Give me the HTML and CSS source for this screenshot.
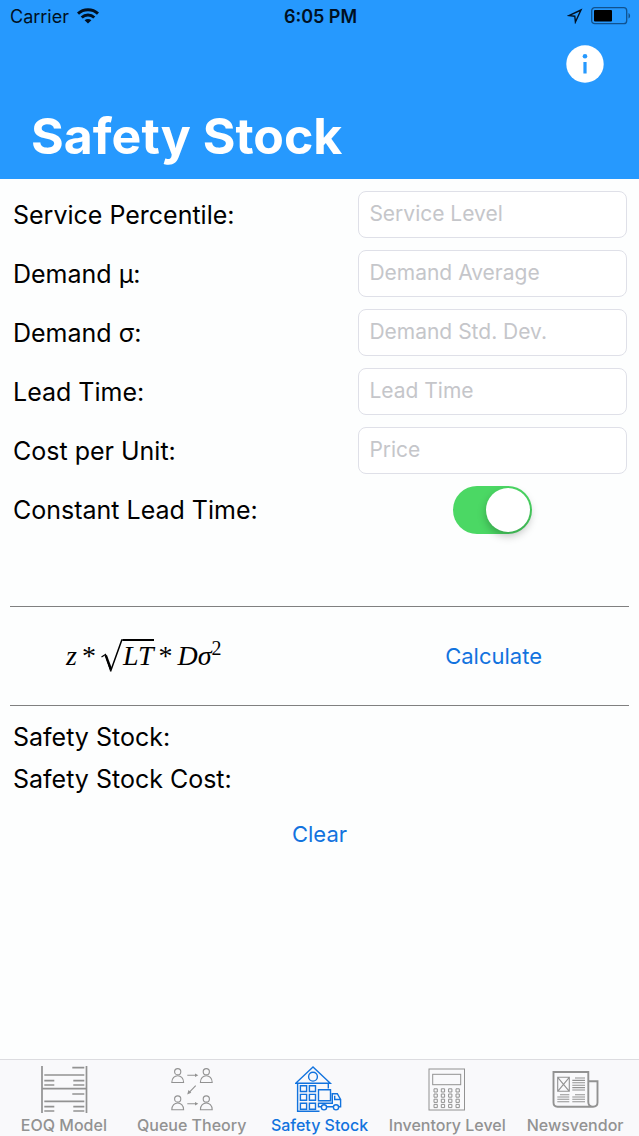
FILE: index.html
```html
<!DOCTYPE html>
<html lang="en">
<head>
    <meta charset="UTF-8">
    <meta name="viewport" content="width=device-width, initial-scale=1.0">
    <title>Safety Stock</title>
    <link rel="stylesheet" href="styles.css">
</head>
<body>
    <header class="header">
        <div class="status-bar">
            <div class="status-left">
                <span>Carrier</span>
                <svg width="22" height="16" viewBox="0 0 22 16" fill="none" stroke="#001022" stroke-width="3">
                    <path d="M1 5.6C6.5 0.4 15.5 0.4 21 5.6"/>
                    <path d="M4.7 9.5C8.3 6.2 13.7 6.2 17.3 9.5"/>
                    <path d="M11 15.6L7.6 12.2C9.4 10.6 12.6 10.6 14.4 12.2Z" fill="#001022" stroke="none"/>
                </svg>
            </div>
            <span class="status-time">6:05 PM</span>
            <div class="status-right">
                <svg width="16" height="16" viewBox="0 0 16 16" fill="none" stroke="#001022" stroke-width="1.4">
                    <path d="M14 2L1.8 7.6L7.8 8.2L8.4 14Z"/>
                </svg>
                <svg width="40" height="18" viewBox="0 0 40 18">
                    <rect x="0.7" y="0.7" width="35" height="16" rx="3" fill="none" stroke="#10528f" stroke-width="1.3"/>
                    <rect x="3" y="3" width="18" height="11.5" rx="1" fill="#000"/>
                    <path d="M37.5 6V11.5C39.6 10.6 39.6 7 37.5 6Z" fill="#10528f"/>
                </svg>
            </div>
        </div>
        <button type="button" class="info-button" aria-label="Info">
            <svg width="38" height="38" viewBox="0 0 38 38">
                <circle cx="19" cy="19" r="18.7" fill="#fff"/>
                <circle cx="19" cy="11.3" r="2.3" fill="#2699fe"/>
                <rect x="17.4" y="17" width="3.2" height="11.5" fill="#2699fe"/>
            </svg>
        </button>
        <h1>Safety Stock</h1>
    </header>

    <main class="content">
        <form id="stockForm">
            <div class="fields">
                <label for="service">Service Percentile:</label>
                <input type="text" id="service" name="service" placeholder="Service Level">

                <label for="average">Demand μ:</label>
                <input type="text" id="average" name="average" placeholder="Demand Average">

                <label for="deviation">Demand σ:</label>
                <input type="text" id="deviation" name="deviation" placeholder="Demand Std. Dev.">

                <label for="leadtime">Lead Time:</label>
                <input type="text" id="leadtime" name="leadtime" placeholder="Lead Time">

                <label for="price">Cost per Unit:</label>
                <input type="text" id="price" name="price" placeholder="Price">

                <label for="constant">Constant Lead Time:</label>
                <input type="checkbox" id="constant" name="constant" class="switch" checked>
            </div>

            <div class="calculate-row">
                <div class="formula">
                    <i>z</i>
                    <span>*</span>
                    <span class="root">
                        <svg width="22" height="34" viewBox="0 0 22 34">
                            <path d="M0.5 18L4.5 15.5L9.5 31.5" fill="none" stroke="#000" stroke-width="1.2"/>
                            <path d="M4.8 16.5L9.8 30" stroke="#000" stroke-width="2.4"/>
                            <path d="M9.5 32.5L20.8 1H22" fill="none" stroke="#000" stroke-width="1.5"/>
                        </svg>
                        <i class="radicand">LT</i>
                    </span>
                    <span>*</span>
                    <span><i>Dσ</i><sup>2</sup></span>
                </div>
                <button type="submit" class="link-button">Calculate</button>
            </div>

            <div class="results">
                <p>Safety Stock: <output id="stock"></output></p>
                <p>Safety Stock Cost: <output id="cost"></output></p>
            </div>
            <button type="reset" class="link-button clear-button">Clear</button>
        </form>
    </main>

    <nav class="tab-bar">
        <a href="#eoq">
            <svg width="48" height="48" viewBox="0 0 48 48" stroke-width="1.7">
                <path d="M2 0V47M46.5 0V47M2 22.7H46.5"/>
                <path d="M32.3 1.7H44.3M4.3 9H44.3M4.3 14.7H14.3M4.3 19H14.3M33.3 14.7H44.3M33.3 19H44.3"/>
                <path d="M32.3 28H44.3M4.3 35.3H44.3M4.3 40.7H14.3M4.3 45H14.3M33.3 40.7H44.3M33.3 45H44.3"/>
            </svg>
            <span>EOQ Model</span>
        </a>
        <a href="#queue">
            <svg width="48" height="48" viewBox="0 0 48 48" stroke-width="1.1">
                <circle cx="9.7" cy="5.7" r="3.1"/>
                <path d="M3.8 16.5C3.8 7.5 15.6 7.5 15.6 16.5Z"/>
                <circle cx="38.3" cy="5.7" r="3.1"/>
                <path d="M32.4 16.5C32.4 7.5 44.2 7.5 44.2 16.5Z"/>
                <circle cx="9.7" cy="33" r="3.1"/>
                <path d="M3.8 43.8C3.8 34.8 15.6 34.8 15.6 43.8Z"/>
                <circle cx="38.3" cy="33" r="3.1"/>
                <path d="M32.4 43.8C32.4 34.8 44.2 34.8 44.2 43.8Z"/>
                <path d="M19.3 9.3H28M19.3 37.7H28M27.7 19.7L21 26.6"/>
                <path d="M27 7.6L30.3 9.3L27 11ZM27 36L30.3 37.7L27 39.4ZM20.5 24L19.2 28.5L23.3 26.8Z" fill="currentColor" stroke="none"/>
            </svg>
            <span>Queue Theory</span>
        </a>
        <a href="#safety" class="active">
            <svg width="48" height="48" viewBox="0 0 48 48" stroke-width="1.4">
                <path d="M18 1L0.7 17.2H35.3ZM2.6 17.2V45.3H24.5M33.3 17.2V22.5"/>
                <circle cx="18" cy="10.7" r="4.4"/>
                <path d="M5.4 19.7H11.6V25.5H5.4ZM14.4 19.7H20.5V25.5H14.4ZM5.4 28.4H11.6V34.3H5.4ZM14.4 28.4H20.5V34.3H14.4ZM5.4 37.3H11.6V43.2H5.4ZM14.4 37.3H20.5V43.2H14.4Z"/>
                <path d="M23.5 23.7H35.5V34.8H23.5ZM26 40.7H23.5V37.3H37.3V27.7H42.3L45.6 33.5V40.7H44M31.8 40.7H38.2M39.7 29.7V33.5H45.6"/>
                <circle cx="29" cy="41.3" r="2.6"/>
                <circle cx="41" cy="41.3" r="2.6"/>
            </svg>
            <span>Safety Stock</span>
        </a>
        <a href="#inventory">
            <svg width="48" height="48" viewBox="0 0 48 48" stroke-width="1">
                <rect x="6" y="3" width="35.5" height="41"/>
                <rect x="9.7" y="8.3" width="28" height="10.4"/>
                <path d="M11 22.8h3.3v3.2h-3.3zM18.3 22.8h3.3v3.2h-3.3zM25.6 22.8h3.3v3.2h-3.3zM33 22.8h3.3v3.2h-3.3z"/>
                <path d="M11 28h3.3v3.2h-3.3zM18.3 28h3.3v3.2h-3.3zM25.6 28h3.3v3.2h-3.3zM33 28h3.3v3.2h-3.3z"/>
                <path d="M11 33.2h3.3v3.2h-3.3zM18.3 33.2h3.3v3.2h-3.3zM25.6 33.2h3.3v3.2h-3.3zM33 33.2h3.3v3.2h-3.3z"/>
                <path d="M11 38.4h3.3v3.2h-3.3zM18.3 38.4h3.3v3.2h-3.3zM25.6 38.4h3.3v3.2h-3.3zM33 38.4h3.3v3.2h-3.3z"/>
            </svg>
            <span>Inventory Level</span>
        </a>
        <a href="#newsvendor">
            <svg width="48" height="48" viewBox="0 0 48 48" stroke-width="1.9">
                <path d="M37.3 15.3V6H2.5V36.5Q2.5 40.7 6.5 40.7H42Q37.3 40.7 37.3 36V15.3H46.5V36.5Q46.5 40.7 42 40.7"/>
                <path d="M6.7 11.3H18.3V25.3H6.7ZM6.7 11.3L18.3 25.3M18.3 11.3L6.7 25.3" stroke-width="1.1"/>
                <path d="M24 12H34M21.3 14.4H34M21.3 16.8H34M21.3 19.2H34M21.3 21.6H34M21.3 24H34M9 28.7H18.3M6.3 31H18.3M6.3 33.3H18.3M6.3 35.7H18.3M24 28.7H34M21.3 31H34M21.3 33.3H34M21.3 35.7H34" stroke-width="1.1"/>
            </svg>
            <span>Newsvendor</span>
        </a>
    </nav>

    <script>
    document.getElementById('stockForm').addEventListener('submit', (e) => {
        e.preventDefault();
    });
    </script>
</body>
</html>
```
FILE: styles.css
```css
* {
    box-sizing: border-box;
}
body {
    font-family: Inter, "Liberation Sans", sans-serif;
    display: flex;
    flex-direction: column;
    min-height: 100vh;
    margin: 0;
    background-color: #fdfefe;
    color: #000;
}
button {
    border: none;
    padding: 0;
    background: none;
    font-family: inherit;
    cursor: pointer;
}
.header {
    display: flex;
    flex-direction: column;
    background-color: #2699fe;
    padding-bottom: 12px;
}
.status-bar {
    display: grid;
    grid-template-columns: 1fr auto 1fr;
    align-items: center;
    height: 32px;
    padding: 0 8px 0 10px;
    font-size: 18px;
    color: #001022;
}
.status-left, .status-right {
    display: flex;
    align-items: center;
    gap: 8px;
}
.status-right {
    justify-content: flex-end;
}
.status-time {
    font-weight: 600;
}
.info-button {
    align-self: flex-end;
    height: 38px;
    margin: 13px 35px 0 0;
}
h1 {
    margin: 22px 31px 0;
    font-size: 50px;
    line-height: 62px;
    font-weight: 700;
    color: #fff;
}
.content {
    flex: 1;
    font-size: 25px;
}
.fields {
    display: grid;
    grid-template-columns: 9fr 7fr;
    grid-auto-rows: 47px;
    align-items: center;
    row-gap: 12px;
    padding: 12px 12px 0 13px;
}
.fields input[type="text"] {
    width: 100%;
    height: 47px;
    padding: 0 10px 2px;
    border: 1px solid #dfe0e8;
    border-radius: 8px;
    background-color: #fff;
    font-family: inherit;
    font-size: 21px;
}
.fields input::placeholder {
    color: #c5c6ca;
    opacity: 1;
}
.switch {
    appearance: none;
    justify-self: center;
    display: flex;
    justify-content: flex-start;
    width: 79px;
    height: 48px;
    margin: 0;
    padding: 2px;
    border-radius: 24px;
    background-color: #e5e5ea;
    cursor: pointer;
}
.switch::before {
    content: "";
    width: 44px;
    height: 44px;
    border-radius: 50%;
    background-color: #fff;
    box-shadow: 0 4px 8px rgba(0, 0, 0, 0.25);
}
.switch:checked {
    justify-content: flex-end;
    background-color: #4bd864;
}
.calculate-row {
    display: grid;
    grid-template-columns: 9fr 7fr;
    align-items: center;
    height: 100px;
    margin: 73px 10px 0;
    border-top: 1px solid #808080;
    border-bottom: 1px solid #808080;
}
.formula {
    display: flex;
    align-items: center;
    gap: 5px;
    padding-left: 56px;
    font-family: "Liberation Serif", serif;
    font-size: 28px;
    line-height: 30px;
}
.formula sup {
    font-size: 20px;
    line-height: 0;
}
.root {
    display: flex;
}
.radicand {
    height: 34px;
    border-top: 2px solid #000;
}
.link-button {
    font-size: 22px;
    line-height: 28px;
    color: #1273de;
}
.results {
    padding: 10px 13px 0;
}
.results p {
    margin: 0;
    line-height: 42px;
}
.clear-button {
    display: block;
    margin: 20px auto 0;
}
.tab-bar {
    display: grid;
    grid-template-columns: repeat(5, 1fr);
    height: 77px;
    padding-top: 6px;
    border-top: 1px solid #dcdce0;
    background-color: #f9f9fb;
}
.tab-bar a {
    display: flex;
    flex-direction: column;
    align-items: center;
    font-size: 16px;
    line-height: 22px;
    font-weight: 500;
    white-space: nowrap;
    text-decoration: none;
    color: #929292;
}
.tab-bar svg {
    fill: none;
    stroke: currentColor;
}
.tab-bar .active {
    color: #1273de;
}
```
